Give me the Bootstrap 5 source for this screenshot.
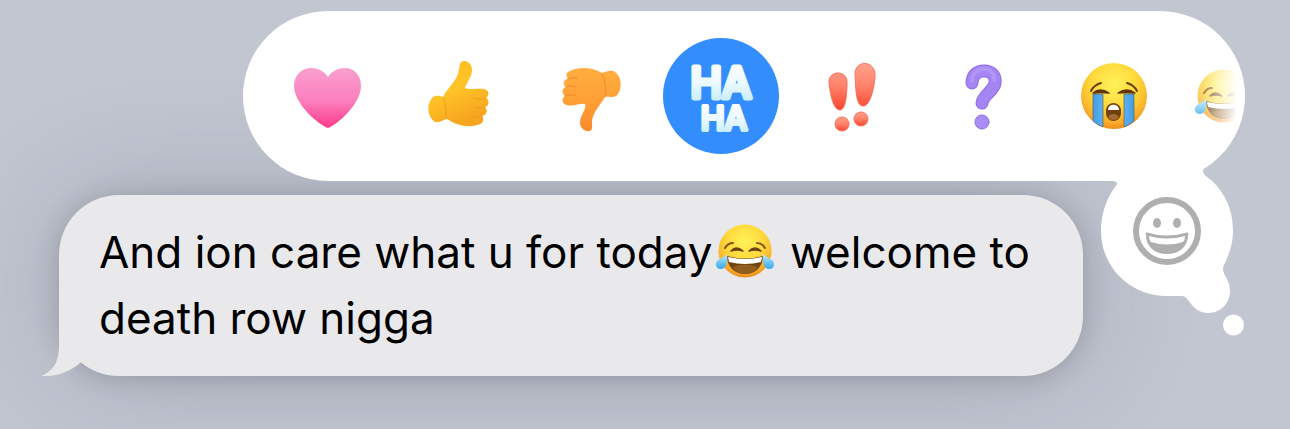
<!DOCTYPE html>
<html lang="en">
<head>
<meta charset="utf-8">
<meta name="viewport" content="width=device-width, initial-scale=1">
<title>Message reactions</title>
<link href="https://cdn.jsdelivr.net/npm/bootstrap@5.3.0/dist/css/bootstrap.min.css" rel="stylesheet">
<style>
  body { background: #c2c6d1; font-family: Inter, "Liberation Sans", sans-serif; color: #000; }
  .tapback { margin: 11px 45px 0 243px; z-index: 2; }
  .tapback-bar { height: 170px; border-radius: 85px; padding: 0 0 0 27px; gap: 15px; background: #fff; }
  .reaction { width: 116px; height: 116px; border: 0; padding: 0; background: transparent; }
  .reaction.active { background: #338dfc; }
  .reaction svg, .thought svg { display: block; }
  .reaction-more { width: 68px; padding-left: 7px; -webkit-mask-image: linear-gradient(90deg, rgba(0,0,0,.75) 16px, transparent 50px); mask-image: linear-gradient(90deg, rgba(0,0,0,.75) 16px, transparent 50px); }
  .thought { top: 134px; right: -10px; }
  .add-reaction { top: 52px; left: 38px; width: 68px; height: 68px; border: 0; padding: 0; background: transparent; }
  .bubble { margin: 14px 207px 53px 59px; padding: 24px 36px 25px 40px; border-radius: 60px; background: #e9e9eb; box-shadow: 0 2px 24px rgba(30,34,48,.2), 0 0 120px rgba(30,34,48,.18); font-size: 44px; line-height: 66px; }
  .bubble-tail { left: -18px; bottom: 0; }
  .inline-emoji { width: 60px; height: 60px; vertical-align: -13px; margin: 0 3px 0 2px; }
  .haha { font: 500 42px Inter, "Liberation Sans", sans-serif; stroke-width: 5px; stroke-linejoin: round; }
  .haha-small { font-size: 32px; stroke-width: 4px; }
</style>
<script src="https://cdn.jsdelivr.net/npm/bootstrap@5.3.0/dist/js/bootstrap.bundle.min.js"></script>
</head>
<body class="min-vh-100 overflow-hidden">

<svg width="0" height="0" class="position-absolute" aria-hidden="true">
  <defs>
    <linearGradient id="pink" x2="0" y2="1"><stop stop-color="#f99fd0"/><stop offset=".55" stop-color="#fc7fbd"/><stop offset="1" stop-color="#fb3a8b"/></linearGradient>
    <linearGradient id="gold" x2=".4" y2="1"><stop stop-color="#ffb81c"/><stop offset=".5" stop-color="#ffc528"/><stop offset="1" stop-color="#f7a51e"/></linearGradient>
    <linearGradient id="amber" x2="0" y2="1"><stop stop-color="#ffae40"/><stop offset=".5" stop-color="#ffa036"/><stop offset="1" stop-color="#f98a2a"/></linearGradient>
    <linearGradient id="red" x2="0" y2="1"><stop stop-color="#ffa28e"/><stop offset=".5" stop-color="#ff8069"/><stop offset="1" stop-color="#f9452f"/></linearGradient>
    <linearGradient id="ice" x2="0" y2="1"><stop stop-color="#fff"/><stop offset=".5" stop-color="#ecfaff"/><stop offset="1" stop-color="#b9e9fd"/></linearGradient>
    <radialGradient id="face" cy=".32" r=".7"><stop stop-color="#fff25a"/><stop offset=".5" stop-color="#ffd93b"/><stop offset=".85" stop-color="#f8a928"/><stop offset="1" stop-color="#e98519"/></radialGradient>
    <linearGradient id="tear" x2="1" y2="0"><stop stop-color="#419de9"/><stop offset=".5" stop-color="#7dc5fa"/><stop offset="1" stop-color="#419de9"/></linearGradient>
    <linearGradient id="drop" x2="0" y2="1"><stop stop-color="#b9ecff"/><stop offset="1" stop-color="#36a9ec"/></linearGradient>
    <symbol id="joy" viewBox="0 0 60 60">
      <circle cx="30" cy="30" r="26.5" fill="url(#face)"/>
      <path d="M10 27Q13 22 18 22M42 22Q47 22 50 27" fill="none" stroke="#8a5313" stroke-width="2" stroke-linecap="round"/>
      <path d="M16 30Q21 24 28 30Q22 28 16 30ZM34 30Q40 24 46 30Q40 28 34 30Z" fill="#70410e" stroke="#70410e" stroke-width="1.5" stroke-linejoin="round"/>
      <path d="M12 35Q30 40 48 35C48 46 40 53 30 53S12 46 12 35Z" fill="#72420f"/>
      <path d="M13 36Q30 40 47 36L46 41Q30 45 14 41Z" fill="#fff"/>
      <path d="M17 46Q30 41 43 46Q38 53 30 53T17 46Z" fill="#925d20"/>
      <path d="M12 33C13 42 11 48 6 48C1 48 -1 43 3 39C6 37 9 36 12 33ZM48 33C47 42 49 48 54 48C59 48 61 43 57 39C54 37 51 36 48 33Z" fill="url(#drop)"/>
    </symbol>
  </defs>
</svg>

<main class="d-flex flex-column">
  <div class="tapback position-relative">
    <div class="tapback-bar d-flex align-items-center overflow-hidden" role="toolbar" aria-label="Reactions">
      <button class="reaction flex-shrink-0 rounded-circle" type="button" aria-label="Heart">
        <svg width="116" height="116" viewBox="0 0 116 116"><path d="M58 90C49 87 24 66 24 48C24 37 32 30 41 30C49 30 55 34 58 39C61 34 67 30 75 30C84 30 91 37 91 48C91 66 67 87 58 90Z" fill="url(#pink)"/></svg>
      </button>
      <button class="reaction flex-shrink-0 rounded-circle" type="button" aria-label="Thumbs up">
        <svg width="116" height="116" viewBox="0 0 116 116">
          <path d="M59 26C60 22 66 22 69 26C75 34 66 44 64 50C69 52 76 50 83 51C88 52 89 57 85 60C89 62 88 68 84 69C87 72 86 77 81 78C84 82 82 86 76 87C66 90 55 87 46 81C42 82 38 85 34 84C26 79 25 65 32 59C36 57 39 58 42 59C45 52 53 45 56 38C58 34 58 30 59 26Z" fill="url(#gold)"/>
          <path d="M73 60Q80 62 85 60M73 69Q79 71 84 69M71 78Q77 80 81 78M42 60Q46 70 45 80" fill="none" stroke="#e8941b" stroke-width="1.3" stroke-linecap="round" opacity=".5"/>
        </svg>
      </button>
      <button class="reaction flex-shrink-0 rounded-circle" type="button" aria-label="Thumbs down">
        <svg width="116" height="116" viewBox="0 0 116 116">
          <path d="M36 34C44 29 59 28 70 35C74 34 77 32 81 33C90 36 91 53 84 58C80 60 76 58 73 59C69 66 62 73 60 82C60 87 61 92 58 93C53 94 48 90 48 85C48 77 55 71 53 66C48 65 41 69 35 67C30 66 29 61 33 58C29 55 30 50 34 49C30 46 32 41 36 41C34 38 34 35 36 34Z" fill="url(#amber)"/>
          <path d="M36 41Q40 39 45 40M34 49Q39 47 44 49M33 58Q39 56 44 58M70 36Q75 47 73 58" fill="none" stroke="#e97b20" stroke-width="1.3" stroke-linecap="round" opacity=".5"/>
        </svg>
      </button>
      <button class="reaction active flex-shrink-0 rounded-circle" type="button" aria-label="Ha ha" aria-pressed="true">
        <svg width="116" height="116" viewBox="0 0 116 116" fill="url(#ice)" stroke="url(#ice)" text-anchor="middle">
          <text class="haha" x="58" y="60">HA</text>
          <text class="haha haha-small" x="61" y="92">HA</text>
        </svg>
      </button>
      <button class="reaction flex-shrink-0 rounded-circle" type="button" aria-label="Emphasize">
        <svg width="116" height="116" viewBox="0 0 116 116" fill="url(#red)" stroke="#fa6f5a" stroke-width="1">
          <path d="M35 44C35 32 53 32 53 44C53 55 52 72 46 72C39 72 36 55 35 44ZM61 36C61 22 80 22 81 36C81 46 77 68 69 68C61 68 62 47 61 36Z"/>
          <circle cx="48" cy="86" r="7"/><circle cx="67" cy="81" r="7"/>
        </svg>
      </button>
      <button class="reaction flex-shrink-0 rounded-circle" type="button" aria-label="Question">
        <svg width="116" height="116" viewBox="0 0 116 116" fill="none" stroke-linecap="round">
          <path d="M47 45C47 37 52 33 59 33C67 33 71 38 70 45C69 53 58 57 57 65" stroke="#8f6de0" stroke-width="13"/>
          <path d="M47 45C47 37 52 33 59 33C67 33 71 38 70 45C69 53 58 57 57 65" stroke="#a585f4" stroke-width="11"/>
          <path d="M47 43C47 36 52 31 59 31C66 31 70 37 69 42" stroke="#bda5fa" stroke-width="4" opacity=".5"/>
          <circle cx="57" cy="84" r="7" fill="#aa8cf5" stroke="#8f6de0" stroke-width="1"/>
        </svg>
      </button>
      <button class="reaction flex-shrink-0 rounded-circle" type="button" aria-label="Loudly crying face">
        <svg width="116" height="116" viewBox="0 0 116 116">
          <circle cx="58" cy="58" r="33" fill="url(#face)"/>
          <path d="M37 56H47V89Q41 87 37 83ZM68 56H78V83Q74 87 68 89Z" fill="url(#tear)" stroke="#60664b" stroke-width=".7"/>
          <path d="M35 53Q38 47 45 45M71 45Q78 47 81 53" fill="none" stroke="#704009" stroke-width="2" stroke-linecap="round"/>
          <path d="M37 55Q44 49 53 55Q44 54 37 55ZM62 55Q71 49 79 55Q71 54 62 55Z" fill="#62350a" stroke="#62350a" stroke-width="1.5" stroke-linejoin="round"/>
          <rect x="50" y="65" width="15" height="18" rx="7.5" fill="#724009"/>
          <path d="M52 72C52 65 63 65 63 72Z" fill="#fff"/><ellipse cx="57.5" cy="79" rx="5" ry="3" fill="#a36b33"/>
        </svg>
      </button>
      <button class="reaction reaction-more flex-shrink-0" type="button" aria-label="Face with tears of joy">
        <svg width="60" height="60"><use href="#joy"/></svg>
      </button>
    </div>
    <div class="thought position-absolute">
      <svg width="160" height="195" viewBox="0 0 160 195" fill="#fff" aria-hidden="true">
        <path d="M8 36H17C22 36 23 38 21 41C12 52 6 68 6 86C6 122 35 151 72 151H81C86 151 90 150 93 155C98 162 104 168 113 168C127 168 135 157 135 146C135 135 128 130 128 124C128 119 138 107 138 86C138 62 128 46 116 35C111 31 106 28 109 23C114 17 123 13 130 5L100 0L8 25Z"/>
        <circle cx="138.5" cy="180" r="10.5"/>
      </svg>
      <button class="add-reaction position-absolute rounded-circle" type="button" aria-label="Add an emoji reaction">
        <svg width="68" height="68" viewBox="0 0 68 68" fill="#afafb1">
          <circle cx="34" cy="34" r="31" fill="none" stroke="#afafb1" stroke-width="6"/>
          <ellipse cx="24" cy="26" rx="4" ry="5"/><ellipse cx="44" cy="26" rx="4" ry="5"/>
          <path d="M13 38C12 36 13 35 16 36Q34 41 52 36C55 35 56 36 55 38C55 50 46 57 34 57S13 50 13 38Z"/>
          <path d="M16 39Q34 44 52 39Q52 43 50 45Q34 50 18 45Q16 43 16 39Z" fill="#fff"/>
        </svg>
      </button>
    </div>
  </div>

  <div class="bubble position-relative">
    <svg class="bubble-tail position-absolute" width="66" height="60" viewBox="0 0 66 60" fill="#e9e9eb" aria-hidden="true"><path d="M18 0V30C18 47 11 56 0 60C14 61 29 56 39 47L50 40V0Z"/></svg>
    <p class="m-0 position-relative">And ion care what u for today<svg class="inline-emoji" role="img" aria-label="face with tears of joy"><use href="#joy"/></svg> welcome to death row nigga</p>
  </div>
</main>
</body>
</html>
